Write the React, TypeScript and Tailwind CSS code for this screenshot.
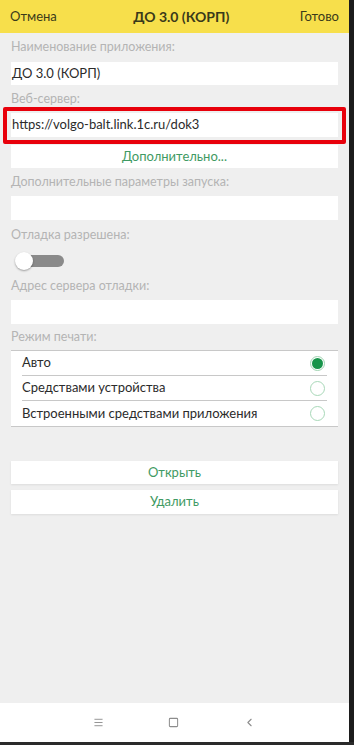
import { Menu, Square, ChevronLeft } from 'lucide-react'

const font = { fontFamily: 'Lato, "Noto Sans", sans-serif' }

function Label({ text, h = 'h-[28px]' }: { text: string; h?: string }) {
  return (
    <div className={`${h} flex items-center text-[12.5px] text-[#b4b4b4]`}>{text}</div>
  )
}

function Field({ value, h = 'h-[23px]' }: { value?: string; h?: string }) {
  return (
    <div className={`${h} bg-white flex items-center px-[1px] text-[13px] text-[#2b2b2b]`}>
      {value}
    </div>
  )
}

function Radio({ checked }: { checked: boolean }) {
  return checked ? (
    <div className="w-[15px] h-[15px] rounded-full border border-[#9fd3b1] flex items-center justify-center">
      <div className="w-[11px] h-[11px] rounded-full bg-[#17944a]" />
    </div>
  ) : (
    <div className="w-[15px] h-[15px] rounded-full border border-[#a8d8b8]" />
  )
}

export default function App() {
  const modes = [
    { title: 'Авто', checked: true },
    { title: 'Средствами устройства', checked: false },
    { title: 'Встроенными средствами приложения', checked: false },
  ]

  return (
    <div className="w-[354px] h-[745px] flex flex-col bg-[#1c1c1c]" style={font}>
      <div className="flex flex-1 min-h-0">
        <div className="w-[349px] flex flex-col bg-[#efefef]">
          {/* Header */}
          <div className="h-[33px] bg-[#f7df4b] flex items-center justify-between px-[10px] text-[13px] text-[#3a3a1a]">
            <span>Отмена</span>
            <span className="font-bold text-[14px] ml-[6px]">ДО 3.0 (КОРП)</span>
            <span>Готово</span>
          </div>

          {/* Form */}
          <div className="flex-1 px-[11px]">
            <Label text="Наименование приложения:" h="h-[29px]" />
            <Field value="ДО 3.0 (КОРП)" />
            <Label text="Веб-сервер:" />
            <div className="relative">
              <Field value="https://volgo-balt.link.1c.ru/dok3" h="h-[24px]" />
              <div className="absolute top-[-6px] bottom-[-7px] left-[-8px] right-[-8px] border-[4px] border-[#e8000b] rounded-[2px]" />
            </div>
            <div className="h-[23px] mt-[8px] bg-white flex items-center justify-center text-[13px] text-[#3f9a63]">
              Дополнительно...
            </div>
            <Label text="Дополнительные параметры запуска:" />
            <Field h="h-[24px]" />
            <Label text="Отладка разрешена:" h="h-[30px]" />
            <div className="h-[22px] flex items-center pl-[4px]">
              <div className="relative w-[50px] h-[20px] flex items-center">
                <div className="ml-[5px] w-[44px] h-[12px] rounded-full bg-[#8a8a8a]" />
                <div className="absolute left-0 top-[1px] w-[18px] h-[18px] rounded-full bg-white shadow-[0_1px_2px_rgba(0,0,0,0.35)]" />
              </div>
            </div>
            <Label text="Адрес сервера отладки:" />
            <Field h="h-[24px]" />
            <div className="h-[26px] flex items-end pb-[3px] text-[12.5px] text-[#b4b4b4]">Режим печати:</div>

            <div className="bg-white border-y border-[#c8c8c8]">
              {modes.map((m, i) => (
                <div key={m.title} className="px-[11px]">
                  <div
                    className={`h-[25px] flex items-center justify-between pr-[2px] text-[13px] text-[#2b2b2b] ${
                      i < modes.length - 1 ? 'border-b border-[#c8c8c8]' : ''
                    }`}
                  >
                    <span>{m.title}</span>
                    <Radio checked={m.checked} />
                  </div>
                </div>
              ))}
            </div>

            <div className="mt-[34px] flex flex-col gap-[6px]">
              <div className="h-[23px] bg-white shadow-[0_1px_2px_rgba(0,0,0,0.08)] flex items-center justify-center text-[13px] text-[#3f9a63]">
                Открыть
              </div>
              <div className="h-[24px] bg-white shadow-[0_1px_2px_rgba(0,0,0,0.08)] flex items-center justify-center text-[13px] text-[#3f9a63]">
                Удалить
              </div>
            </div>
          </div>

          {/* Nav bar */}
          <div className="h-[39px] bg-white flex items-center justify-center gap-[60px] text-[#8c8c8c]">
            <Menu size={11} strokeWidth={2} />
            <Square size={11} strokeWidth={2.2} className="mx-[4px]" />
            <ChevronLeft size={13} strokeWidth={2} />
          </div>
        </div>
        <div className="w-[5px] bg-[#1c1c1c]" />
      </div>
      <div className="h-[3px] bg-[#2a2a2a]" />
    </div>
  )
}
